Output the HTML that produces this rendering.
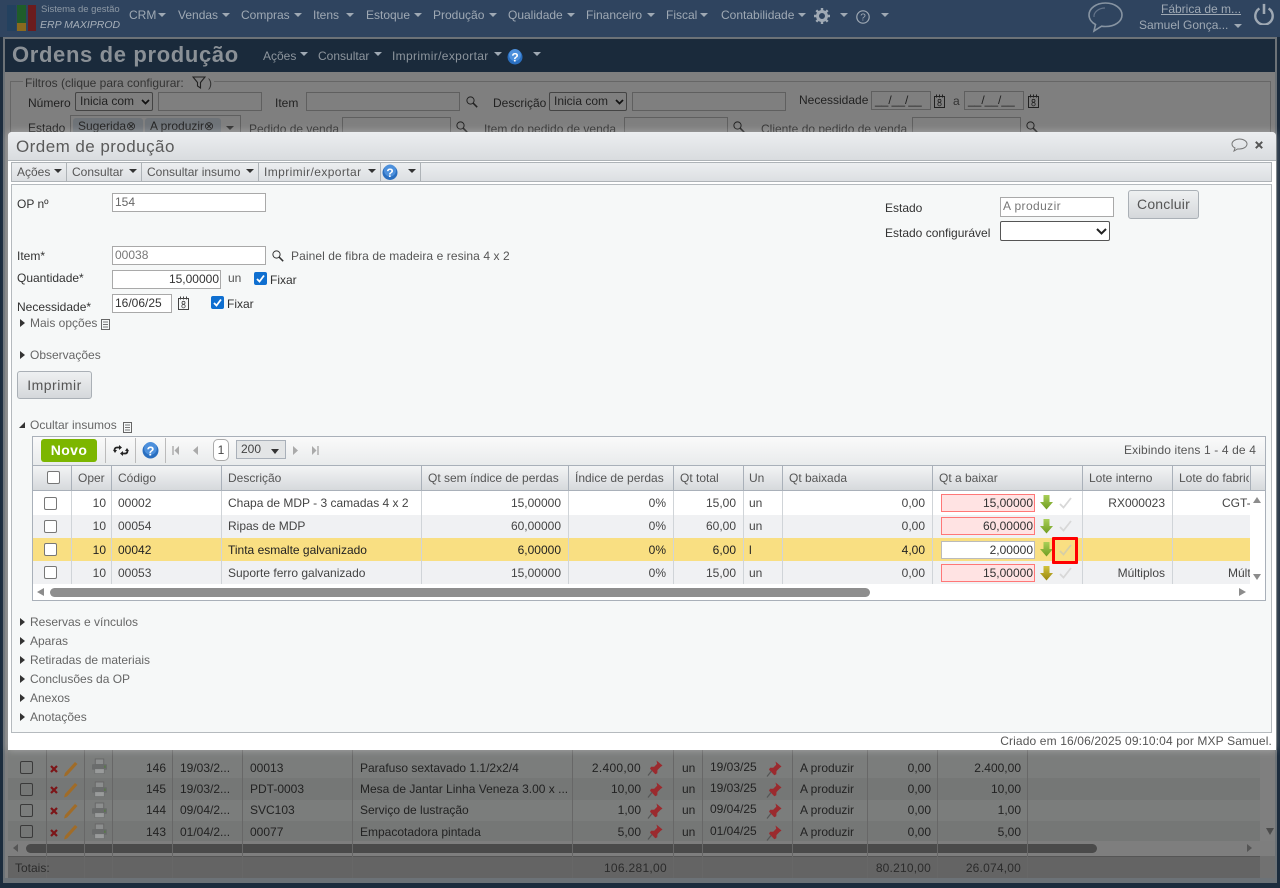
<!DOCTYPE html>
<html lang="pt"><head><meta charset="utf-8"><title>Ordem de produção</title>
<style>
html,body{margin:0;padding:0}
body{width:1280px;height:888px;overflow:hidden;position:relative;background:#1c2c3d;font:12px/14px "Liberation Sans",Arial,sans-serif;color:#444}
div,span,i,svg{position:absolute}
.t{white-space:nowrap}
.r{text-align:right}
.m{color:#9fa9b4}
.a{width:0;height:0;border-left:4px solid transparent;border-right:4px solid transparent;border-top:4px solid #9fa9b4}
.ad{border-top-color:#333}
.b{color:#222}
.f{background:#7f7f7f;border:1px solid #5f5f5f;box-sizing:border-box}
.in{background:#fff;border:1px solid #a9a9a9;box-sizing:border-box;padding:0 3px;line-height:16px;white-space:nowrap}
.tr{width:0;height:0;border-top:4px solid transparent;border-bottom:4px solid transparent;border-left:5px solid #333}
.bl{background:#676767;width:1px}
.vl{background:#d0d4d8;width:1px}
.cb{width:13px;height:13px;border:1px solid #777;border-radius:2px;background:#fff;box-sizing:border-box}
.bcb{width:13px;height:13px;border:1px solid #3a3a3a;border-radius:2px;box-sizing:border-box}
.rr{background:#ffe3e3;border:1px solid #f77;box-sizing:border-box;text-align:right;padding-right:1px;line-height:17px;color:#333;width:94px;height:18px;left:941px}
.btn{background:linear-gradient(#eef0f1,#d5d8db);border:1px solid #aab0b6;border-radius:3px;box-sizing:border-box;font-size:14px;text-align:center;color:#555}
</style></head><body>
<svg width="0" height="0" style="left:0;top:0"><defs>
<linearGradient id="gg" x1="0" y1="0" x2="0" y2="1"><stop offset="0" stop-color="#a9cf58"/><stop offset="1" stop-color="#6f9c20"/></linearGradient>
<linearGradient id="gy" x1="0" y1="0" x2="0" y2="1"><stop offset="0" stop-color="#d2c23a"/><stop offset="1" stop-color="#98860f"/></linearGradient>
<symbol id="sr" viewBox="0 0 12 12"><circle cx="4.500" cy="4.500" r="3.600" fill="none" stroke="currentColor" stroke-width="1"/><path d="M7.200 7.200l4 4" stroke="currentColor" stroke-width="1.500"/></symbol>
<symbol id="cal" viewBox="0 0 13 14"><rect x="1.500" y="2.500" width="10" height="11" fill="none" stroke="currentColor"/><path d="M3.500 0.500v3M6.500 0.500v3M9.500 0.500v3" stroke="currentColor"/><circle cx="6.500" cy="6.800" r="1.500" fill="none" stroke="currentColor" stroke-width=".8"/><circle cx="6.500" cy="10.200" r="1.700" fill="none" stroke="currentColor" stroke-width=".8"/></symbol>
<symbol id="dn" viewBox="0 0 13 15"><path d="M3.500 0h6v7h3.500l-6.500 7.500L0 7h3.500z"/></symbol>
<symbol id="ck" viewBox="0 0 13 12"><path d="M1 7l3.500 3.500L12 1" fill="none" stroke="currentColor" stroke-width="1.800"/></symbol>
<symbol id="hp" viewBox="0 0 16 16"><circle cx="8" cy="8" r="7.500" fill="#2a6fc0"/><circle cx="8" cy="6" r="6" fill="#4d90dc"/><text x="8" y="12.500" font-family="Liberation Sans" font-size="12" font-weight="700" fill="#fff" text-anchor="middle">?</text></symbol>
<symbol id="doc" viewBox="0 0 9 11"><rect x=".5" y=".5" width="8" height="10" fill="none" stroke="#666"/><path d="M2 3h5M2 5.500h5M2 8h5" stroke="#777"/></symbol>
<symbol id="pin" viewBox="0 0 16 16"><path d="M9.500 0.500l6 5-2 1.500-3 3-.2 3.200-2 1-5.300-5.500 1-2 3.200.1 3-3z" fill="#9b2a2e"/><path d="M5 10.500l-4 5" stroke="#555" stroke-width="1.200"/></symbol>
<symbol id="pc" viewBox="0 0 14 16"><path d="M11 1l2.500 2L3 14.500l-3 1 1-3.500z" fill="#a06c28"/></symbol>
<symbol id="x" viewBox="0 0 8 8"><path d="M1 1l6 6M7 1L1 7" stroke="#7c1518" stroke-width="2.200"/></symbol>
<symbol id="pr" viewBox="0 0 16 16"><rect x="3.500" y="0.500" width="9" height="6" fill="#8c8e8e" stroke="#666"/><rect x="0" y="6" width="16" height="6" rx="1" fill="#6a6c6c"/><rect x="3" y="11" width="10" height="5" fill="#999b9b" stroke="#6a6c6c" stroke-width=".6"/><rect x="13" y="7.500" width="1.500" height="2.500" fill="#567a45"/></symbol>
</defs></svg>

<!-- app header -->
<div style="left:0;top:0;width:1280px;height:37px;background:#2f445f"></div>
<div style="left:7px;top:5px;width:9px;height:26px;background:#23415f"></div>
<div style="left:17px;top:5px;width:9px;height:26px;background:#1f5d2a"></div>
<div style="left:17px;top:23px;width:9px;height:8px;background:#8a6a1e"></div>
<div style="left:28px;top:5px;width:8px;height:26px;background:#6b1c1e"></div>
<span class="t" style="left:41px;top:3px;font-size:9.500px;color:#8e99a5">Sistema de gestão</span>
<span class="t" style="left:40px;top:18px;font-size:10.500px;font-style:italic;color:#a6afb9">ERP MAXIPROD</span>
<span class="t m" style="left:129px;top:8px">CRM</span><i class="a" style="left:158px;top:13px"></i>
<span class="t m" style="left:178px;top:8px">Vendas</span><i class="a" style="left:222px;top:13px"></i>
<span class="t m" style="left:241px;top:8px">Compras</span><i class="a" style="left:294px;top:13px"></i>
<span class="t m" style="left:313px;top:8px">Itens</span><i class="a" style="left:346px;top:13px"></i>
<span class="t m" style="left:366px;top:8px">Estoque</span><i class="a" style="left:414px;top:13px"></i>
<span class="t m" style="left:433px;top:8px">Produção</span><i class="a" style="left:489px;top:13px"></i>
<span class="t m" style="left:508px;top:8px">Qualidade</span><i class="a" style="left:567px;top:13px"></i>
<span class="t m" style="left:586px;top:8px">Financeiro</span><i class="a" style="left:647px;top:13px"></i>
<span class="t m" style="left:666px;top:8px">Fiscal</span><i class="a" style="left:700px;top:13px"></i>
<span class="t m" style="left:721px;top:8px">Contabilidade</span><i class="a" style="left:798px;top:13px"></i>
<svg style="left:814px;top:8px" width="16" height="16" viewBox="0 0 16 16"><circle cx="8" cy="8" r="4.500" fill="none" stroke="#9fa9b4" stroke-width="3"/><path d="M8 0v3M8 13v3M0 8h3M13 8h3M2.300 2.300l2 2M11.700 11.700l2 2M13.700 2.300l-2 2M4.300 11.700l-2 2" stroke="#9fa9b4" stroke-width="2.400"/></svg>
<i class="a" style="left:840px;top:13px"></i>
<svg style="left:856px;top:10px" width="14" height="14" viewBox="0 0 14 14"><circle cx="7" cy="7" r="6.200" fill="none" stroke="#9fa9b4" stroke-width="1.200"/><text x="7" y="10.500" font-family="Liberation Sans" font-size="10" fill="#9fa9b4" text-anchor="middle">?</text></svg>
<i class="a" style="left:881px;top:13px"></i>
<svg style="left:1087px;top:1px" width="37" height="32" viewBox="0 0 37 32"><path d="M18.500 2C9 2 2 7.500 2 14c0 4 2.700 7.500 6.500 9.500L7 30l7.500-4.800c1.300.2 2.700.3 4 .3C28 25.500 35 20.500 35 14S28 2 18.500 2z" fill="none" stroke="#8794a2" stroke-width="1.600"/><path d="M7 16c-.5-5 5-9 11-9" fill="none" stroke="#64748a" stroke-width="1.200"/></svg>
<span class="t m" style="left:1161px;top:2px;text-decoration:underline">Fábrica de m...</span>
<span class="t m" style="left:1139px;top:18px">Samuel Gonça...</span><i class="a" style="left:1234px;top:24px"></i>
<svg style="left:1253px;top:3px" width="22" height="22" viewBox="0 0 24 24"><path d="M7 6a9.500 9.500 0 1 0 10 0" fill="none" stroke="#9fa9b4" stroke-width="2.600"/><path d="M12 1v11" stroke="#9fa9b4" stroke-width="2.800"/></svg>

<!-- underlying page -->
<div style="left:3px;top:37px;width:1274px;height:846px;background:#7f7f7f;border:2px solid #6c7277;box-sizing:border-box"></div>
<div style="left:5px;top:39px;width:1270px;height:33px;background:#1a2a3b"></div>
<span class="t" style="left:12px;top:41px;font-size:22px;line-height:28px;font-weight:700;color:#8a9096;letter-spacing:.65px">Ordens de produção</span>
<span class="t m" style="left:263px;top:49px;color:#8d959d">Ações</span><i class="a" style="left:300px;top:52px"></i>
<span class="t m" style="left:318px;top:49px;color:#8d959d">Consultar</span><i class="a" style="left:374px;top:52px"></i>
<span class="t m" style="left:392px;top:49px;color:#8d959d;letter-spacing:.35px">Imprimir/exportar</span><i class="a" style="left:494px;top:52px"></i>
<svg style="left:507px;top:49px" width="16" height="16"><use href="#hp"/></svg><i class="a" style="left:533px;top:52px"></i>

<div style="left:10px;top:81px;width:1261px;height:60px;border:1px solid #666;box-sizing:border-box"></div>
<div style="left:23px;top:75px;width:191px;height:14px;background:#7f7f7f"></div>
<span class="t" style="left:25px;top:76px;color:#333">Filtros (clique para configurar:</span>
<svg style="left:192px;top:76px" width="14" height="13" viewBox="0 0 14 13"><path d="M1 1h12L8.500 6.500V12L5.500 10V6.500z" fill="none" stroke="#222" stroke-width="1.100"/></svg>
<span class="t" style="left:208px;top:76px;color:#333">)</span>
<span class="t b" style="left:28px;top:96px">Número</span>
<div class="in" style="left:75px;top:92px;width:78px;height:19px;background:#7f7f7f;border-color:#444;color:#222;border-radius:2px;padding-left:4px">Inicia com</div>
<svg style="left:141px;top:99px" width="9" height="6" viewBox="0 0 9 6"><path d="M1 1l3.500 3.500L8 1" fill="none" stroke="#111" stroke-width="1.700"/></svg>
<div class="f" style="left:158px;top:92px;width:104px;height:19px"></div>
<span class="t b" style="left:275px;top:96px">Item</span>
<div class="f" style="left:306px;top:92px;width:154px;height:19px"></div>
<svg style="left:466px;top:96px;color:#222" width="12" height="12"><use href="#sr"/></svg>
<span class="t b" style="left:493px;top:96px">Descrição</span>
<div class="in" style="left:549px;top:92px;width:78px;height:19px;background:#7f7f7f;border-color:#444;color:#222;border-radius:2px;padding-left:4px">Inicia com</div>
<svg style="left:615px;top:99px" width="9" height="6" viewBox="0 0 9 6"><path d="M1 1l3.500 3.500L8 1" fill="none" stroke="#111" stroke-width="1.700"/></svg>
<div class="f" style="left:632px;top:92px;width:154px;height:19px"></div>
<span class="t b" style="left:799px;top:93px">Necessidade</span>
<div class="f t b" style="left:871px;top:91px;width:60px;height:19px;padding-left:3px;line-height:17px">__/__/__</div>
<svg style="left:933px;top:94px;color:#222" width="13" height="14"><use href="#cal"/></svg>
<span class="t" style="left:953px;top:94px;color:#333">a</span>
<div class="f t b" style="left:964px;top:91px;width:60px;height:19px;padding-left:3px;line-height:17px">__/__/__</div>
<svg style="left:1027px;top:94px;color:#222" width="13" height="14"><use href="#cal"/></svg>
<span class="t b" style="left:28px;top:121px">Estado</span>
<div class="f" style="left:70px;top:115px;width:171px;height:22px"></div>
<div style="left:73px;top:118px;width:70px;height:16px;background:#6e7378;border-radius:3px"></div>
<span class="t" style="left:78px;top:119px;color:#222">Sugerida⊗</span>
<div style="left:145px;top:118px;width:76px;height:16px;background:#6e7378;border-radius:3px"></div>
<span class="t" style="left:150px;top:119px;color:#222">A produzir⊗</span>
<i class="a ad" style="left:226px;top:126px"></i>
<span class="t" style="left:249px;top:122px;color:#333">Pedido de venda</span>
<div class="f" style="left:342px;top:117px;width:109px;height:20px"></div>
<svg style="left:456px;top:121px;color:#222" width="12" height="12"><use href="#sr"/></svg>
<span class="t" style="left:484px;top:122px;color:#333">Item do pedido de venda</span>
<div class="f" style="left:624px;top:117px;width:104px;height:20px"></div>
<svg style="left:733px;top:121px;color:#222" width="12" height="12"><use href="#sr"/></svg>
<span class="t" style="left:761px;top:122px;color:#333">Cliente do pedido de venda</span>
<div class="f" style="left:912px;top:117px;width:109px;height:20px"></div>
<svg style="left:1026px;top:121px;color:#222" width="12" height="12"><use href="#sr"/></svg>

<!-- underlying table -->
<div style="left:8px;top:750px;width:1252px;height:28px;background:#7b7d7c"></div>
<div style="left:8px;top:778px;width:1252px;height:22px;background:#757776"></div>
<div style="left:8px;top:800px;width:1252px;height:21px;background:#7b7d7c"></div>
<div style="left:8px;top:821px;width:1252px;height:20px;background:#757776"></div>
<div style="left:8px;top:841px;width:1267px;height:15px;background:#7e7e7e"></div>
<div style="left:26px;top:844px;width:1071px;height:9px;background:#4a4a4a;border-radius:5px"></div>
<div class="tr" style="left:1247px;top:844px;border-left-color:#555"></div>
<div style="left:13px;top:844px;width:0;height:0;border-top:4px solid transparent;border-bottom:4px solid transparent;border-right:5px solid #555"></div>
<div style="left:1266px;top:828px;width:0;height:0;border-left:4px solid transparent;border-right:4px solid transparent;border-top:7px solid #4c4c4c"></div>
<div style="left:8px;top:856px;width:1252px;height:22px;background:#646464;border-top:1px solid #555;box-sizing:border-box"></div>
<div style="left:1260px;top:856px;width:15px;height:22px;background:#717171"></div>
<div style="left:5px;top:878px;width:1270px;height:3px;background:#6c7277"></div>
<i class="bl" style="left:46px;top:750px;height:128px"></i><i class="bl" style="left:84px;top:750px;height:128px"></i><i class="bl" style="left:112px;top:750px;height:128px"></i><i class="bl" style="left:172px;top:750px;height:128px"></i><i class="bl" style="left:242px;top:750px;height:128px"></i><i class="bl" style="left:352px;top:750px;height:128px"></i><i class="bl" style="left:572px;top:750px;height:128px"></i><i class="bl" style="left:673px;top:750px;height:128px"></i><i class="bl" style="left:702px;top:750px;height:128px"></i><i class="bl" style="left:792px;top:750px;height:128px"></i><i class="bl" style="left:867px;top:750px;height:128px"></i><i class="bl" style="left:937px;top:750px;height:128px"></i><i class="bl" style="left:1027px;top:750px;height:128px"></i>

<i class="bcb" style="left:20px;top:761px"></i><i class="bcb" style="left:20px;top:783px"></i><i class="bcb" style="left:20px;top:804px"></i><i class="bcb" style="left:20px;top:825px"></i>
<svg style="left:50px;top:765px" width="8" height="8"><use href="#x"/></svg><svg style="left:50px;top:786px" width="8" height="8"><use href="#x"/></svg><svg style="left:50px;top:807px" width="8" height="8"><use href="#x"/></svg><svg style="left:50px;top:829px" width="8" height="8"><use href="#x"/></svg>
<svg style="left:64px;top:761px" width="14" height="16"><use href="#pc"/></svg><svg style="left:64px;top:782px" width="14" height="16"><use href="#pc"/></svg><svg style="left:64px;top:803px" width="14" height="16"><use href="#pc"/></svg><svg style="left:64px;top:824px" width="14" height="16"><use href="#pc"/></svg>
<svg style="left:92px;top:758px" width="15" height="16"><use href="#pr"/></svg><svg style="left:92px;top:781px" width="15" height="16"><use href="#pr"/></svg><svg style="left:92px;top:802px" width="15" height="16"><use href="#pr"/></svg><svg style="left:92px;top:823px" width="15" height="16"><use href="#pr"/></svg>

<span class="t b" style="left:146px;top:761px">146</span><span class="t b" style="left:180px;top:761px">19/03/2...</span><span class="t b" style="left:250px;top:761px">00013</span><span class="t b" style="left:360px;top:761px">Parafuso sextavado 1.1/2x2/4</span><span class="t b r" style="left:560px;top:761px;width:81px;letter-spacing:.3px">2.400,00</span>
<span class="t b" style="left:146px;top:782px">145</span><span class="t b" style="left:180px;top:782px">19/03/2...</span><span class="t b" style="left:250px;top:782px">PDT-0003</span><span class="t b" style="left:360px;top:782px">Mesa de Jantar Linha Veneza 3.00 x ...</span><span class="t b r" style="left:560px;top:782px;width:81px">10,00</span>
<span class="t b" style="left:146px;top:803px">144</span><span class="t b" style="left:180px;top:803px">09/04/2...</span><span class="t b" style="left:250px;top:803px">SVC103</span><span class="t b" style="left:360px;top:803px">Serviço de lustração</span><span class="t b r" style="left:560px;top:803px;width:81px">1,00</span>
<span class="t b" style="left:146px;top:825px">143</span><span class="t b" style="left:180px;top:825px">01/04/2...</span><span class="t b" style="left:250px;top:825px">00077</span><span class="t b" style="left:360px;top:825px">Empacotadora pintada</span><span class="t b r" style="left:560px;top:825px;width:81px">5,00</span>
<svg style="left:647px;top:760px" width="16" height="16"><use href="#pin"/></svg><svg style="left:647px;top:782px" width="16" height="16"><use href="#pin"/></svg><svg style="left:647px;top:803px" width="16" height="16"><use href="#pin"/></svg><svg style="left:647px;top:824px" width="16" height="16"><use href="#pin"/></svg>
<span class="t b" style="left:682px;top:761px">un</span><span class="t b" style="left:682px;top:782px">un</span><span class="t b" style="left:682px;top:803px">un</span><span class="t b" style="left:682px;top:825px">un</span>
<span class="t b" style="left:710px;top:760px">19/03/25</span><span class="t b" style="left:710px;top:781px">19/03/25</span><span class="t b" style="left:710px;top:802px">09/04/25</span><span class="t b" style="left:710px;top:824px">01/04/25</span>
<svg style="left:766px;top:761px" width="16" height="16"><use href="#pin"/></svg><svg style="left:766px;top:782px" width="16" height="16"><use href="#pin"/></svg><svg style="left:766px;top:803px" width="16" height="16"><use href="#pin"/></svg><svg style="left:766px;top:825px" width="16" height="16"><use href="#pin"/></svg>
<span class="t b" style="left:800px;top:761px">A produzir</span><span class="t b" style="left:800px;top:782px">A produzir</span><span class="t b" style="left:800px;top:803px">A produzir</span><span class="t b" style="left:800px;top:825px">A produzir</span>
<span class="t b r" style="left:880px;top:761px;width:51px">0,00</span><span class="t b r" style="left:880px;top:782px;width:51px">0,00</span><span class="t b r" style="left:880px;top:803px;width:51px">0,00</span><span class="t b r" style="left:880px;top:825px;width:51px">0,00</span>
<span class="t b r" style="left:940px;top:761px;width:81px">2.400,00</span><span class="t b r" style="left:940px;top:782px;width:81px">10,00</span><span class="t b r" style="left:940px;top:803px;width:81px">1,00</span><span class="t b r" style="left:940px;top:825px;width:81px">5,00</span>
<span class="t" style="left:15px;top:861px;color:#2b2b2b">Totais:</span>
<span class="t r" style="left:580px;top:861px;width:87px;color:#2b2b2b;letter-spacing:.3px">106.281,00</span>
<span class="t r" style="left:870px;top:861px;width:61px;color:#2b2b2b;letter-spacing:.2px">80.210,00</span>
<span class="t r" style="left:940px;top:861px;width:81px;color:#2b2b2b;letter-spacing:.2px">26.074,00</span>

<!-- modal -->
<div style="left:8px;top:132px;width:1268px;height:618px;background:#fff;border-radius:4px 4px 0 0;box-shadow:0 0 8px rgba(255,255,255,.35)"></div>
<div style="left:8px;top:132px;width:1268px;height:29px;background:linear-gradient(#eceef0,#d9dcdf);border-bottom:1px solid #aeb3b7;border-radius:4px 4px 0 0;box-sizing:border-box"></div>
<span class="t" style="left:16px;top:137px;font-size:17px;line-height:20px;color:#5a5a5a;letter-spacing:.45px">Ordem de produção</span>
<svg style="left:1231px;top:138px" width="17" height="14" viewBox="0 0 17 14"><path d="M8.500 1C4.500 1 1 3.200 1 6c0 1.700 1.200 3.100 3 4l-1 3 3.500-2h2C12.500 11 16 8.800 16 6S12.500 1 8.500 1z" fill="none" stroke="#777"/></svg>
<svg style="left:1255px;top:141px" width="8" height="8" viewBox="0 0 8 8"><path d="M.8.800l6.400 6.400M7.200.800L.8 7.200" stroke="#555" stroke-width="2"/></svg>

<div style="left:11px;top:162px;width:1261px;height:20px;background:linear-gradient(#eceef0,#dcdfe2);border:1px solid #aeb3b7;box-sizing:border-box"></div>
<span class="t" style="left:17px;top:165px;color:#555">Ações</span><i class="a ad" style="left:54px;top:169px"></i>
<i class="vl" style="left:66px;top:162px;height:20px;background:#aeb3b7"></i>
<span class="t" style="left:72px;top:165px;color:#555">Consultar</span><i class="a ad" style="left:129px;top:169px"></i>
<i class="vl" style="left:141px;top:162px;height:20px;background:#aeb3b7"></i>
<span class="t" style="left:147px;top:165px;color:#555">Consultar insumo</span><i class="a ad" style="left:246px;top:169px"></i>
<i class="vl" style="left:258px;top:162px;height:20px;background:#aeb3b7"></i>
<span class="t" style="left:264px;top:165px;color:#555;letter-spacing:.4px">Imprimir/exportar</span><i class="a ad" style="left:368px;top:169px"></i>
<i class="vl" style="left:380px;top:162px;height:20px;background:#aeb3b7"></i>
<svg style="left:382px;top:164px" width="16" height="17"><use href="#hp"/></svg><i class="a ad" style="left:408px;top:169px"></i>
<i class="vl" style="left:420px;top:162px;height:20px;background:#aeb3b7"></i>

<div style="left:11px;top:184px;width:1261px;height:549px;background:#f6f8f8;border:1px solid #b5babe;box-sizing:border-box"></div>

<span class="t" style="left:17px;top:197px;color:#333">OP nº</span>
<div class="in" style="left:112px;top:193px;width:154px;height:19px;color:#666;padding-left:2px">154</div>
<span class="t" style="left:17px;top:249px;color:#333">Item*</span>
<div class="in" style="left:112px;top:246px;width:154px;height:19px;color:#777;padding-left:2px">00038</div>
<svg style="left:272px;top:250px;color:#333" width="12" height="12"><use href="#sr"/></svg>
<span class="t" style="left:291px;top:249px;color:#555;letter-spacing:.08px">Painel de fibra de madeira e resina 4 x 2</span>
<span class="t" style="left:17px;top:271px;color:#333">Quantidade*</span>
<div class="in r" style="left:112px;top:270px;width:109px;height:19px;color:#333;padding-right:1px">15,00000</div>
<span class="t" style="left:228px;top:271px;color:#555">un</span>
<div style="left:254px;top:272px;width:13px;height:13px;background:#0f6fd0;border-radius:2px"></div>
<svg style="left:255px;top:273px" width="11" height="11" viewBox="0 0 11 11"><path d="M2 6l2.500 2.500L9 2.500" fill="none" stroke="#fff" stroke-width="1.800"/></svg>
<span class="t" style="left:270px;top:273px;color:#333">Fixar</span>
<span class="t" style="left:17px;top:300px;color:#333">Necessidade*</span>
<div class="in" style="left:112px;top:294px;width:60px;height:19px;color:#333;padding-left:2px">16/06/25</div>
<svg style="left:177px;top:296px;color:#444" width="13" height="14"><use href="#cal"/></svg>
<div style="left:211px;top:296px;width:13px;height:13px;background:#0f6fd0;border-radius:2px"></div>
<svg style="left:212px;top:297px" width="11" height="11" viewBox="0 0 11 11"><path d="M2 6l2.500 2.500L9 2.500" fill="none" stroke="#fff" stroke-width="1.800"/></svg>
<span class="t" style="left:227px;top:297px;color:#333">Fixar</span>
<div class="tr" style="left:20px;top:319px"></div><span class="t" style="left:30px;top:316px;color:#666">Mais opções</span>
<svg style="left:101px;top:319px" width="9" height="11"><use href="#doc"/></svg>
<div class="tr" style="left:20px;top:351px"></div><span class="t" style="left:30px;top:348px;color:#666">Observações</span>
<div class="btn" style="left:17px;top:371px;width:75px;height:28px;line-height:26px;letter-spacing:.5px">Imprimir</div>

<span class="t" style="left:885px;top:201px;color:#333">Estado</span>
<div class="in" style="left:1000px;top:197px;width:114px;height:20px;color:#777;padding-left:2px;letter-spacing:.4px">A produzir</div>
<span class="t" style="left:885px;top:226px;color:#333">Estado configurável</span>
<div class="in" style="left:1000px;top:221px;width:110px;height:20px;border-color:#555;border-radius:2px"></div>
<svg style="left:1096px;top:228px" width="11" height="7" viewBox="0 0 11 7"><path d="M1 1l4.500 4.500L10 1" fill="none" stroke="#222" stroke-width="2"/></svg>
<div class="btn" style="left:1128px;top:190px;width:71px;height:29px;line-height:27px;letter-spacing:.2px">Concluir</div>

<div style="left:19px;top:422px;width:0;height:0;border-bottom:6px solid #333;border-left:6px solid transparent"></div>
<span class="t" style="left:30px;top:418px;color:#666">Ocultar insumos</span>
<svg style="left:123px;top:422px" width="9" height="11"><use href="#doc"/></svg>

<!-- grid -->
<div style="left:32px;top:436px;width:1234px;height:165px;background:#fff;border:1px solid #a9b0b9;box-sizing:border-box"></div>
<div style="left:33px;top:437px;width:1232px;height:28px;background:linear-gradient(#fafafa,#e9ebec)"></div>
<div class="t" style="left:41px;top:439px;width:56px;height:23px;background:#7cb600;border-radius:3px;color:#fff;font-weight:700;font-size:14px;line-height:23px;text-align:center;letter-spacing:.4px">Novo</div>
<i class="vl" style="left:105px;top:438px;height:25px;background:#bbb"></i>
<svg style="left:113px;top:444px" width="16" height="13" viewBox="0 0 16 13"><path d="M7 3.500H4C2.500 3.500 1.500 4.500 1.500 6.500M14.500 6.500c0 2-1 3-2.500 3H9" fill="none" stroke="#222" stroke-width="1.800"/><path d="M0 6h4L2 9zM16 7h-4l2-3zM6 1v5l3-2.500zM10 12V7L7 9.500z" fill="#222"/></svg>
<i class="vl" style="left:135px;top:438px;height:25px;background:#bbb"></i>
<svg style="left:142px;top:442px" width="17" height="17" viewBox="0 0 16 16"><use href="#hp"/></svg>
<i class="vl" style="left:165px;top:438px;height:25px;background:#bbb"></i>
<svg style="left:172px;top:446px" width="8" height="9" viewBox="0 0 8 9"><path d="M1 0v9" stroke="#aaa" stroke-width="1.400"/><path d="M7 0v9L2.500 4.500z" fill="#aaa"/></svg>
<svg style="left:192px;top:446px" width="7" height="9" viewBox="0 0 7 9"><path d="M6 0v9L1 4.500z" fill="#aaa"/></svg>
<div class="t" style="left:213px;top:439px;width:16px;height:22px;background:#fff;border:1px solid #aaa;border-radius:5px;box-sizing:border-box;text-align:center;line-height:20px;color:#444">1</div>
<div class="t" style="left:236px;top:440px;width:50px;height:19px;background:#e3e5e6;border:1px solid #a9b0b9;box-sizing:border-box;padding-left:4px;line-height:16px;color:#444">200</div>
<i class="a ad" style="left:271px;top:449px;border-left-width:4.500px;border-right-width:4.500px;border-top-width:5px"></i>
<svg style="left:292px;top:446px" width="7" height="9" viewBox="0 0 7 9"><path d="M1 0v9l5-4.500z" fill="#aaa"/></svg>
<svg style="left:311px;top:446px" width="8" height="9" viewBox="0 0 8 9"><path d="M1 0v9l4.500-4.500z" fill="#aaa"/><path d="M7 0v9" stroke="#aaa" stroke-width="1.400"/></svg>
<span class="t r" style="left:1050px;top:443px;width:206px;color:#555;letter-spacing:.13px">Exibindo itens 1 - 4 de 4</span>

<div style="left:33px;top:465px;width:1232px;height:26px;background:linear-gradient(#f3f4f5,#d6d9dc);border-top:1px solid #a9b0b9;border-bottom:1px solid #a9b0b9;box-sizing:border-box"></div>
<div style="left:33px;top:491px;width:1217px;height:24px;background:#fff"></div>
<div style="left:33px;top:515px;width:1217px;height:23px;background:#f0f1f3"></div>
<div style="left:33px;top:538px;width:1217px;height:23px;background:#f9df82"></div>
<div style="left:33px;top:561px;width:1217px;height:23px;background:#f0f1f3"></div>

<i class="vl" style="left:71px;top:465px;height:26px;background:#a9b0b9"></i><i class="vl" style="left:111px;top:465px;height:26px;background:#a9b0b9"></i><i class="vl" style="left:221px;top:465px;height:26px;background:#a9b0b9"></i><i class="vl" style="left:421px;top:465px;height:26px;background:#a9b0b9"></i><i class="vl" style="left:568px;top:465px;height:26px;background:#a9b0b9"></i><i class="vl" style="left:673px;top:465px;height:26px;background:#a9b0b9"></i><i class="vl" style="left:743px;top:465px;height:26px;background:#a9b0b9"></i><i class="vl" style="left:782px;top:465px;height:26px;background:#a9b0b9"></i><i class="vl" style="left:932px;top:465px;height:26px;background:#a9b0b9"></i><i class="vl" style="left:1082px;top:465px;height:26px;background:#a9b0b9"></i><i class="vl" style="left:1172px;top:465px;height:26px;background:#a9b0b9"></i><i class="vl" style="left:1250px;top:465px;height:26px;background:#a9b0b9"></i>
<i class="vl" style="left:71px;top:491px;height:93px"></i><i class="vl" style="left:111px;top:491px;height:93px"></i><i class="vl" style="left:221px;top:491px;height:93px"></i><i class="vl" style="left:421px;top:491px;height:93px"></i><i class="vl" style="left:568px;top:491px;height:93px"></i><i class="vl" style="left:673px;top:491px;height:93px"></i><i class="vl" style="left:743px;top:491px;height:93px"></i><i class="vl" style="left:782px;top:491px;height:93px"></i><i class="vl" style="left:932px;top:491px;height:93px"></i><i class="vl" style="left:1082px;top:491px;height:93px"></i><i class="vl" style="left:1172px;top:491px;height:93px"></i>

<i class="cb" style="left:47px;top:471px"></i>
<span class="t" style="left:78px;top:471px;color:#555">Oper</span>
<span class="t" style="left:118px;top:471px;color:#555">Código</span>
<span class="t" style="left:228px;top:471px;color:#555">Descrição</span>
<span class="t" style="left:428px;top:471px;color:#555">Qt sem índice de perdas</span>
<span class="t" style="left:575px;top:471px;color:#555">Índice de perdas</span>
<span class="t" style="left:680px;top:471px;color:#555">Qt total</span>
<span class="t" style="left:749px;top:471px;color:#555">Un</span>
<span class="t" style="left:789px;top:471px;color:#555">Qt baixada</span>
<span class="t" style="left:939px;top:471px;color:#555">Qt a baixar</span>
<span class="t" style="left:1089px;top:471px;color:#555">Lote interno</span>
<div class="t" style="left:1179px;top:471px;width:70px;overflow:hidden;color:#555">Lote do fabricante</div>

<i class="cb" style="left:44px;top:497px"></i><i class="cb" style="left:44px;top:520px"></i><i class="cb" style="left:44px;top:543px"></i><i class="cb" style="left:44px;top:566px"></i>
<span class="t r" style="left:75px;top:496px;width:31px">10</span><span class="t r" style="left:75px;top:519px;width:31px">10</span><span class="t r" style="left:75px;top:543px;width:31px;color:#222">10</span><span class="t r" style="left:75px;top:566px;width:31px">10</span>
<span class="t" style="left:118px;top:496px">00002</span><span class="t" style="left:118px;top:519px">00054</span><span class="t" style="left:118px;top:543px;color:#222">00042</span><span class="t" style="left:118px;top:566px">00053</span>
<span class="t" style="left:228px;top:496px">Chapa de MDP - 3 camadas 4 x 2</span><span class="t" style="left:228px;top:519px">Ripas de MDP</span><span class="t" style="left:228px;top:543px;color:#222">Tinta esmalte galvanizado</span><span class="t" style="left:228px;top:566px">Suporte ferro galvanizado</span>
<span class="t r" style="left:430px;top:496px;width:131px">15,00000</span><span class="t r" style="left:430px;top:519px;width:131px">60,00000</span><span class="t r" style="left:430px;top:543px;width:131px;color:#222">6,00000</span><span class="t r" style="left:430px;top:566px;width:131px">15,00000</span>
<span class="t r" style="left:600px;top:496px;width:66px">0%</span><span class="t r" style="left:600px;top:519px;width:66px">0%</span><span class="t r" style="left:600px;top:543px;width:66px;color:#222">0%</span><span class="t r" style="left:600px;top:566px;width:66px">0%</span>
<span class="t r" style="left:680px;top:496px;width:56px">15,00</span><span class="t r" style="left:680px;top:519px;width:56px">60,00</span><span class="t r" style="left:680px;top:543px;width:56px;color:#222">6,00</span><span class="t r" style="left:680px;top:566px;width:56px">15,00</span>
<span class="t" style="left:749px;top:496px">un</span><span class="t" style="left:749px;top:519px">un</span><span class="t" style="left:749px;top:543px;color:#222">l</span><span class="t" style="left:749px;top:566px">un</span>
<span class="t r" style="left:850px;top:496px;width:75px">0,00</span><span class="t r" style="left:850px;top:519px;width:75px">0,00</span><span class="t r" style="left:850px;top:543px;width:75px;color:#222">4,00</span><span class="t r" style="left:850px;top:566px;width:75px">0,00</span>

<div class="rr" style="top:494px">15,00000</div>
<div class="rr" style="top:517px">60,00000</div>
<div class="rr" style="top:541px;background:#fff;border-color:#bbb">2,00000</div>
<div class="rr" style="top:564px">15,00000</div>
<svg style="left:1040px;top:495px;fill:url(#gg)" width="13" height="15"><use href="#dn"/></svg>
<svg style="left:1040px;top:519px;fill:url(#gg)" width="13" height="15"><use href="#dn"/></svg>
<svg style="left:1040px;top:542px;fill:url(#gg)" width="13" height="15"><use href="#dn"/></svg>
<svg style="left:1040px;top:566px;fill:url(#gy)" width="13" height="15"><use href="#dn"/></svg>
<svg style="left:1059px;top:497px;color:#d8d8d8" width="13" height="12"><use href="#ck"/></svg>
<svg style="left:1059px;top:520px;color:#d8d8d8" width="13" height="12"><use href="#ck"/></svg>
<svg style="left:1059px;top:544px;color:#d6cfa6" width="13" height="12"><use href="#ck"/></svg>
<svg style="left:1059px;top:567px;color:#d8d8d8" width="13" height="12"><use href="#ck"/></svg>
<div style="left:1052px;top:537px;width:26px;height:27px;border:3px solid #f00;box-sizing:border-box;border-radius:1px"></div>

<span class="t r" style="left:1090px;top:496px;width:75px">RX000023</span>
<div class="t" style="left:1222px;top:496px;width:28px;overflow:hidden">CGT-001</div>
<span class="t r" style="left:1090px;top:566px;width:75px">Múltiplos</span>
<div class="t" style="left:1228px;top:566px;width:22px;overflow:hidden">Múltiplos</div>

<div style="left:1253px;top:497px;width:0;height:0;border-left:4.500px solid transparent;border-right:4.500px solid transparent;border-bottom:6px solid #8c8c8c"></div>
<div style="left:1253px;top:574px;width:0;height:0;border-left:4.500px solid transparent;border-right:4.500px solid transparent;border-top:6px solid #8c8c8c"></div>
<div style="left:50px;top:588px;width:820px;height:9px;background:#8e8e8e;border-radius:5px"></div>
<div style="left:37px;top:588px;width:0;height:0;border-top:4.500px solid transparent;border-bottom:4.500px solid transparent;border-right:7px solid #8c8c8c"></div>
<div class="tr" style="left:1239px;top:588px;border-top-width:4.500px;border-bottom-width:4.500px;border-left:7px solid #8c8c8c"></div>

<div class="tr" style="left:20px;top:618px"></div><span class="t" style="left:30px;top:615px;color:#666">Reservas e vínculos</span>
<div class="tr" style="left:20px;top:637px"></div><span class="t" style="left:30px;top:634px;color:#666">Aparas</span>
<div class="tr" style="left:20px;top:656px"></div><span class="t" style="left:30px;top:653px;color:#666">Retiradas de materiais</span>
<div class="tr" style="left:20px;top:675px"></div><span class="t" style="left:30px;top:672px;color:#666">Conclusões da OP</span>
<div class="tr" style="left:20px;top:694px"></div><span class="t" style="left:30px;top:691px;color:#666">Anexos</span>
<div class="tr" style="left:20px;top:713px"></div><span class="t" style="left:30px;top:710px;color:#666">Anotações</span>

<span class="t r" style="left:900px;top:734px;width:372px;color:#555;letter-spacing:.13px">Criado em 16/06/2025 09:10:04 por MXP Samuel.</span>
</body></html>
